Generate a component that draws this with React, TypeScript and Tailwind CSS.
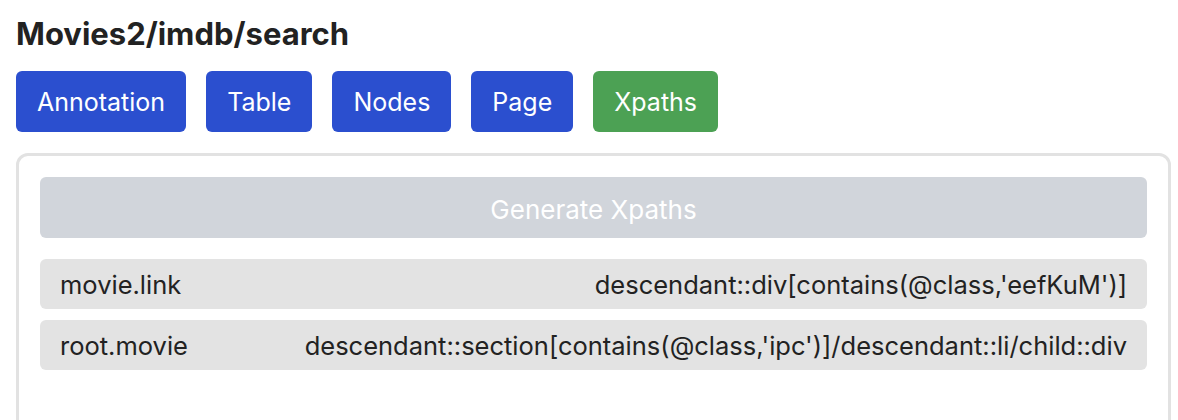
const TABS = [
  { label: "Annotation", active: false },
  { label: "Table", active: false },
  { label: "Nodes", active: false },
  { label: "Page", active: false },
  { label: "Xpaths", active: true },
];

const XPATHS = [
  { name: "movie.link", path: "descendant::div[contains(@class,'eefKuM')]" },
  { name: "root.movie", path: "descendant::section[contains(@class,'ipc')]/descendant::li/child::div" },
];

export default function App() {
  return (
    <div className="min-h-[420px] bg-white pl-4 pr-[7px] pt-[14px] text-[#222] font-['Inter',sans-serif]">
      <h1 className="text-[31px] font-bold leading-[40px] text-[#222]">Movies2/imdb/search</h1>

      <div className="mt-[17px] flex gap-5">
        {TABS.map((tab) => (
          <button
            key={tab.label}
            className={`h-[61px] rounded-md px-[21px] pt-[3px] text-[25px] text-white ${
              tab.active ? "bg-[#4ca154]" : "bg-[#2b4fcf]"
            }`}
          >
            {tab.label}
          </button>
        ))}
      </div>

      <div className="mt-[21px] h-[280px] rounded-xl border-[3px] border-[#e2e2e2] px-[21px] pt-[21px]">
        <button
          disabled
          className="h-[61px] w-full rounded-md bg-[#d1d5db] pt-[3px] text-[26px] text-white"
        >
          Generate Xpaths
        </button>

        <div className="mt-[21px] flex flex-col gap-[11px]">
          {XPATHS.map((x) => (
            <div
              key={x.name}
              className="flex h-[50px] items-center justify-between rounded-md bg-[#e3e3e3] px-5 pt-[2px] text-[25.5px]"
            >
              <span>{x.name}</span>
              <span>{x.path}</span>
            </div>
          ))}
        </div>
      </div>
    </div>
  );
}
